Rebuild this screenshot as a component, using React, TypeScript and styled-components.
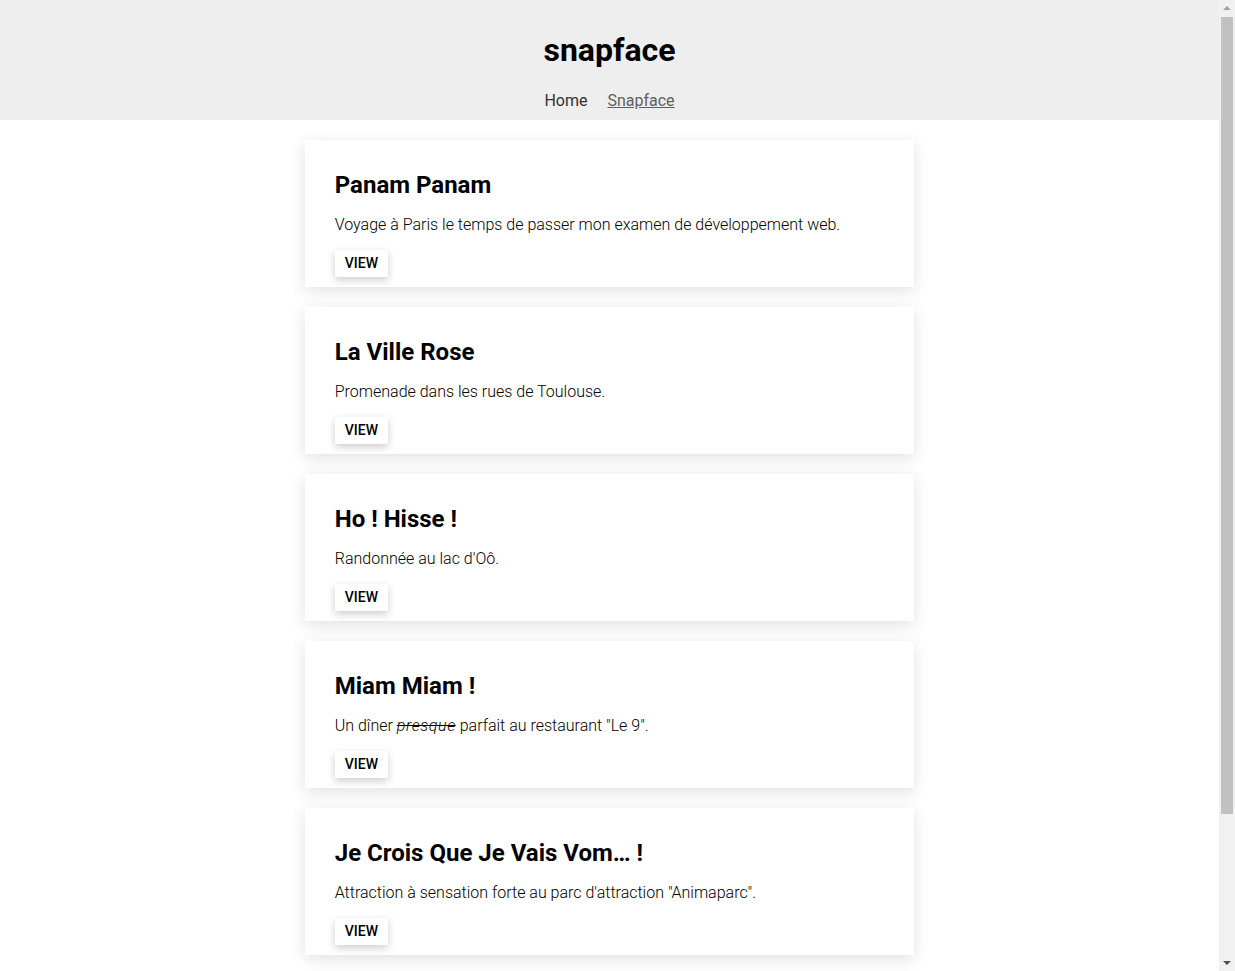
import React from "react";
import styled, { createGlobalStyle } from "styled-components";

const GlobalStyle = createGlobalStyle`
  html, body {
    margin: 0;
    padding: 0;
    background: #ffffff;
    font-family: Roboto, "Liberation Sans", Arial, sans-serif;
    color: #000;
  }
  * { box-sizing: border-box; }
`;

const Page = styled.div`
  width: calc(100% - 16px);
  padding-bottom: 187px;
`;

const Header = styled.header`
  background: #eeeeee;
  height: 120px;
  padding: 31px 0 8px;
  display: flex;
  flex-direction: column;
  align-items: center;
`;

const Brand = styled.h1`
  margin: 0 0 22px;
  font-size: 32px;
  line-height: 38px;
  font-weight: 700;
  color: #000;
`;

const Nav = styled.nav`
  display: flex;
  gap: 20px;
  font-size: 16px;
  line-height: 20px;
`;

const NavLink = styled.a<{ $active?: boolean }>`
  color: ${(p) => (p.$active ? "#5f5f5f" : "#333333")};
  text-decoration: ${(p) => (p.$active ? "underline" : "none")};
  cursor: pointer;
`;

const List = styled.main`
  width: 50%;
  margin: 20px auto 0;
  display: flex;
  flex-direction: column;
  gap: 20px;
`;

const Card = styled.article`
  background: #fff;
  padding: 31px 30px 10px;
  box-shadow: 0 4px 16px rgba(0, 0, 0, 0.12);
`;

const Title = styled.h2`
  margin: 0;
  font-size: 24px;
  line-height: 28px;
  font-weight: 700;
  color: #000;
`;

const Description = styled.p`
  margin: 16px 0 15px;
  font-size: 16px;
  line-height: 20px;
  font-weight: 300;
  color: #000;
`;

const Struck = styled.span`
  font-style: italic;
  font-weight: 300;
  letter-spacing: 0.6px;
  text-decoration: line-through;
`;

const ViewButton = styled.button`
  display: inline-block;
  border: none;
  background: #fff;
  padding: 5px 10px;
  font-family: Roboto, "Liberation Sans", Arial, sans-serif;
  font-size: 14px;
  line-height: 17px;
  font-weight: 500;
  color: #000;
  text-transform: uppercase;
  box-shadow: 0 3px 8px rgba(0, 0, 0, 0.2);
  cursor: pointer;
`;

const ScrollTrack = styled.div`
  position: fixed;
  top: 0;
  right: 0;
  width: 16px;
  height: 100vh;
  background: #f1f1f1;
`;

const ScrollThumb = styled.div`
  position: absolute;
  top: 17px;
  left: 2px;
  width: 12px;
  height: 797px;
  background: #c1c1c1;
`;

const Arrow = styled.div<{ $down?: boolean }>`
  position: absolute;
  left: 4px;
  ${(p) => (p.$down ? "bottom: 6px;" : "top: 6px;")}
  width: 0;
  height: 0;
  border-left: 4px solid transparent;
  border-right: 4px solid transparent;
  ${(p) =>
    p.$down
      ? "border-top: 4px solid #505050;"
      : "border-bottom: 4px solid #a3a3a3;"}
`;

type Snap = { title: string; description: React.ReactNode };

const snaps: Snap[] = [
  {
    title: "Panam Panam",
    description: "Voyage à Paris le temps de passer mon examen de développement web.",
  },
  { title: "La Ville Rose", description: "Promenade dans les rues de Toulouse." },
  { title: "Ho ! Hisse !", description: "Randonnée au lac d'Oô." },
  {
    title: "Miam Miam !",
    description: (
      <>
        Un dîner <Struck>presque</Struck> parfait au restaurant "Le 9".
      </>
    ),
  },
  {
    title: "Je Crois Que Je Vais Vom… !",
    description: 'Attraction à sensation forte au parc d\'attraction "Animaparc".',
  },
];

export default function App() {
  return (
    <>
      <GlobalStyle />
      <Page>
        <Header>
          <Brand>snapface</Brand>
          <Nav>
            <NavLink>Home</NavLink>
            <NavLink $active>Snapface</NavLink>
          </Nav>
        </Header>
        <List>
          {snaps.map((s) => (
            <Card key={s.title}>
              <Title>{s.title}</Title>
              <Description>{s.description}</Description>
              <ViewButton>View</ViewButton>
            </Card>
          ))}
        </List>
      </Page>
      <ScrollTrack>
        <Arrow />
        <ScrollThumb />
        <Arrow $down />
      </ScrollTrack>
    </>
  );
}
